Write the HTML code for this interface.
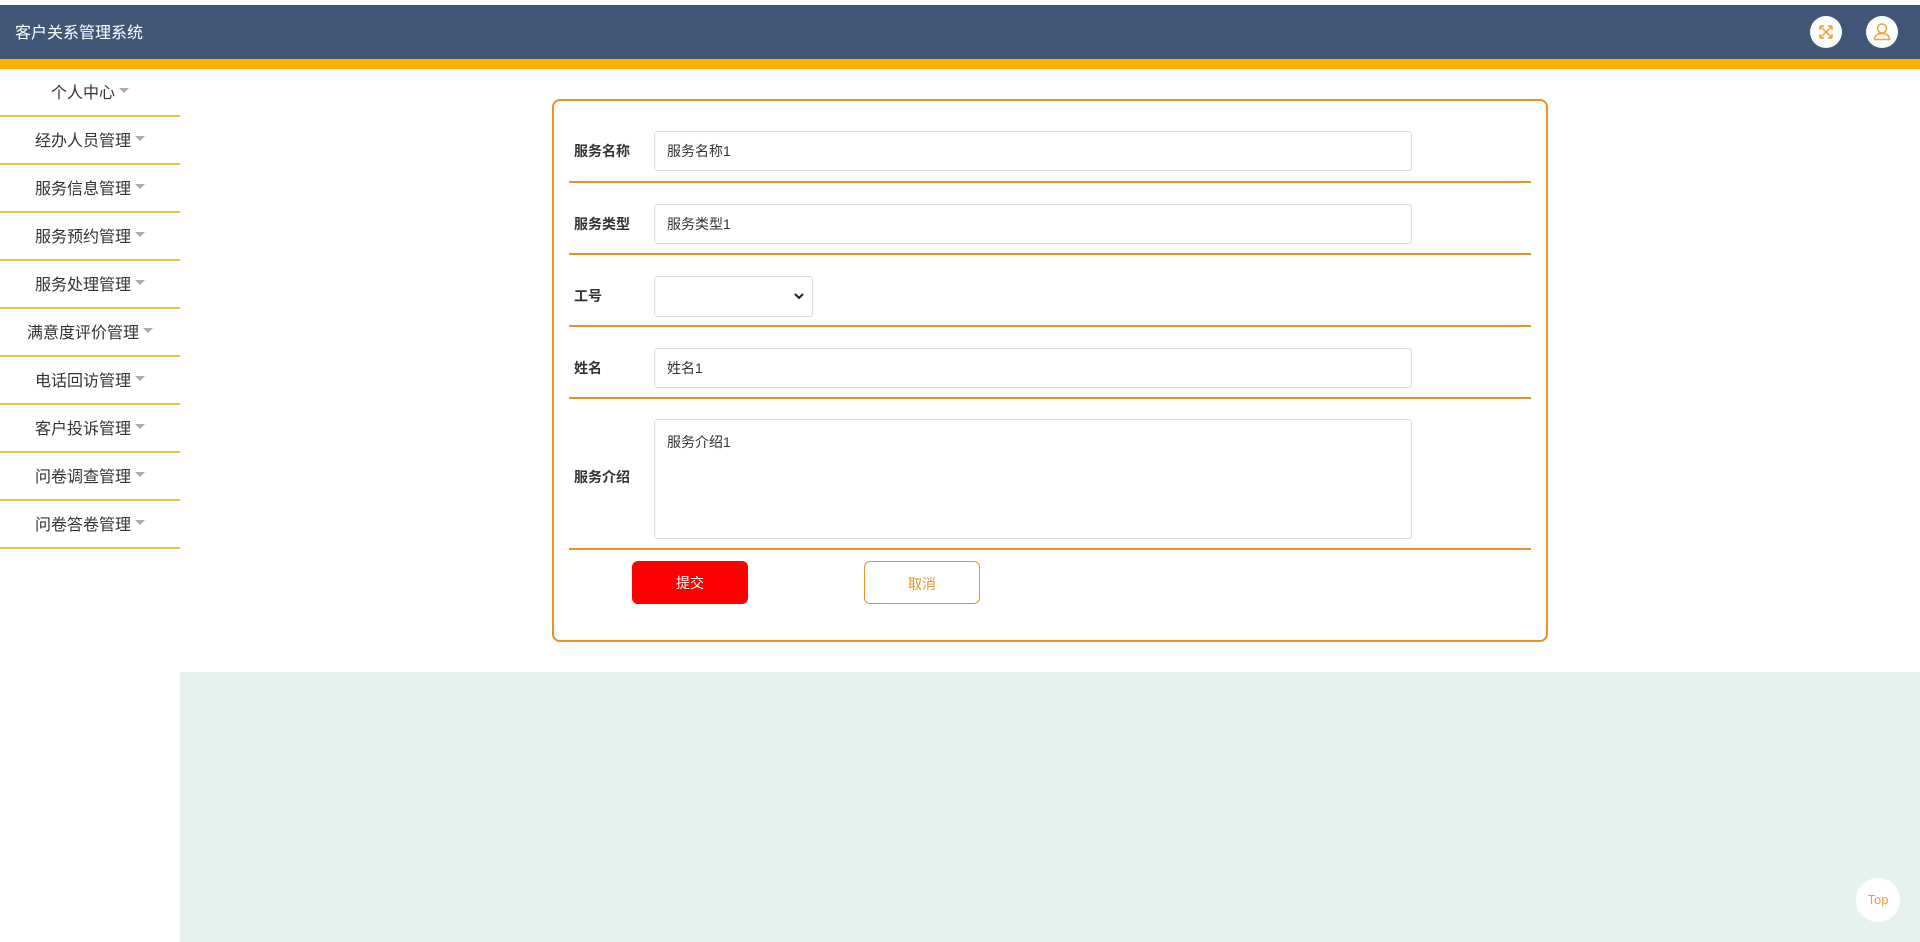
<!DOCTYPE html>
<html><head><meta charset="utf-8"><style>
*{margin:0;padding:0;box-sizing:border-box}
body{width:1920px;height:942px;overflow:hidden;background:#fff;font-family:"Liberation Sans","Noto Sans CJK SC",sans-serif;position:relative}
.top{position:absolute;left:0;top:5px;width:1920px;height:54px;background:#425678;color:#fff;font-size:16px;line-height:58px;padding-left:15px}
.yel{position:absolute;left:0;top:59px;width:1920px;height:10px;background:#ffb300}
.ic{position:absolute;top:16px;width:32px;height:32px;border-radius:50%;background:#fff}
.side{position:absolute;left:0;top:69px;width:180px}
.side div{height:48px;border-bottom:2px solid #f0c040;text-align:center;line-height:50px;font-size:16px;color:#333}
.side div:after{content:"";display:inline-block;border:5px solid transparent;border-top:5px solid #aaa;margin-left:4px;vertical-align:0px}
.green{position:absolute;left:180px;top:672px;right:0;bottom:0;background:#e6f2ec}
.card{position:absolute;left:552px;top:99px;width:996px;height:543px;border:2px solid #e8922a;border-radius:8px}
.row{position:absolute;left:15px;width:962px;border-bottom:2px solid #e8922a}
.lab{position:absolute;left:5px;font-size:14px;font-weight:bold;color:#333;line-height:40px}
.inp{position:absolute;left:85px;width:758px;height:40px;border:1px solid #ddd;border-radius:3px;font-size:14px;color:#333;padding-left:12px;line-height:38px}
.btn{position:absolute;top:460px;width:116px;height:43px;border-radius:6px;font-size:14px;text-align:center;line-height:45px}
</style></head><body>
<div class="top">客户关系管理系统</div>
<div class="yel"></div>
<div class="ic" style="left:1810px"><svg width="32" height="32" viewBox="0 0 32 32" fill="none" stroke="#f0a030" stroke-width="1.5"><path d="M10 10l12 12M22 10L10 22M10 10h4M10 10v4M22 10h-4M22 10v4M10 22h4M10 22v-4M22 22h-4M22 22v-4"/></svg></div>
<div class="ic" style="left:1866px"><svg width="32" height="32" viewBox="0 0 32 32" fill="none" stroke="#f0a030" stroke-width="1.5"><circle cx="16" cy="12.5" r="4.5"/><path d="M8.5 23.5c0-4 3.5-6 7.5-6s7.5 2 7.5 6z"/></svg></div>
<div class="side">
<div>个人中心</div><div>经办人员管理</div><div>服务信息管理</div><div>服务预约管理</div><div>服务处理管理</div><div>满意度评价管理</div><div>电话回访管理</div><div>客户投诉管理</div><div>问卷调查管理</div><div>问卷答卷管理</div>
</div>
<div class="green"></div>
<div class="card">
<div class="row" style="top:0;height:82px"><span class="lab" style="top:30px">服务名称</span><div class="inp" style="top:30px">服务名称1</div></div>
<div class="row" style="top:82px;height:72px"><span class="lab" style="top:21px">服务类型</span><div class="inp" style="top:21px">服务类型1</div></div>
<div class="row" style="top:154px;height:72px"><span class="lab" style="top:21px">工号</span><div class="inp" style="top:21px;width:159px;height:41px"><svg style="position:absolute;right:8px;top:15px" width="10" height="8" viewBox="0 0 10 8"><path d="M1 2l4 4 4-4" stroke="#222" stroke-width="2" fill="none"/></svg></div></div>
<div class="row" style="top:226px;height:72px"><span class="lab" style="top:21px">姓名</span><div class="inp" style="top:21px">姓名1</div></div>
<div class="row" style="top:298px;height:151px"><span class="lab" style="top:58px">服务介绍</span><div class="inp" style="top:20px;height:120px;line-height:20px;padding-top:12px">服务介绍1</div></div>
<div class="btn" style="left:78px;background:#ff0000;color:#fff">提交</div>
<div class="btn" style="left:310px;border:1px solid #e8922a;color:#e8922a">取消</div>
</div>
<div style="position:absolute;left:1856px;top:878px;width:44px;height:44px;border-radius:50%;background:#fff;color:#f0a030;font-size:13px;text-align:center;line-height:44px">Top</div>
</body></html>
